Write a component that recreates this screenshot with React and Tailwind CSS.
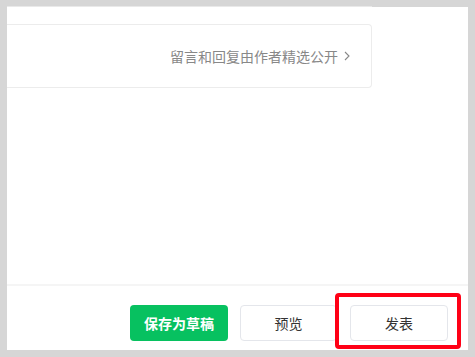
export default function App() {
  return (
    <div
      className="w-[475px] h-[357px] bg-[#d6d6d6] pl-[7px] pr-[7px] pt-[6px] pb-[7px] flex flex-col"
      style={{ fontFamily: '"Noto Sans CJK SC", "Noto Sans", sans-serif' }}
    >
      <div className="h-[1px] w-[365px] bg-[#e9e9e9] shrink-0" />
      <div className="flex-1 bg-white flex flex-col">
        <div className="flex-1 pt-[17px]">
          <div className="w-[365px] h-[64px] border-y border-r border-[#ececec] rounded-r-[4px] flex items-center justify-end pr-[21px]">
            <span className="text-[14px] leading-none text-[#888888]">留言和回复由作者精选公开</span>
            <svg width="6" height="10" viewBox="0 0 6 10" className="ml-[6px]">
              <path d="M1 1 L5 5 L1 9" fill="none" stroke="#888888" strokeWidth="1.1" />
            </svg>
          </div>
        </div>
        <div className="h-[66px] border-t-2 border-[#f5f5f5] flex justify-end items-start pt-[19px] pr-[20px] gap-[12px]">
          <button className="w-[98px] h-[36px] rounded-[4px] bg-[#07c160] text-white text-[14px] font-bold">
            保存为草稿
          </button>
          <button className="w-[97px] h-[36px] rounded-[4px] border border-[#e4e6eb] bg-white text-[#333333] text-[14px]">
            预览
          </button>
          <div className="relative ml-[1px]">
            <button className="w-[98px] h-[36px] rounded-[4px] border border-[#e4e6eb] bg-white text-[#333333] text-[14px]">
              发表
            </button>
            <div className="absolute left-[-15px] right-[-13px] top-[-12px] bottom-[-8px] border-[4px] border-[#ff0016] rounded-[4px]" />
          </div>
        </div>
      </div>
    </div>
  );
}
